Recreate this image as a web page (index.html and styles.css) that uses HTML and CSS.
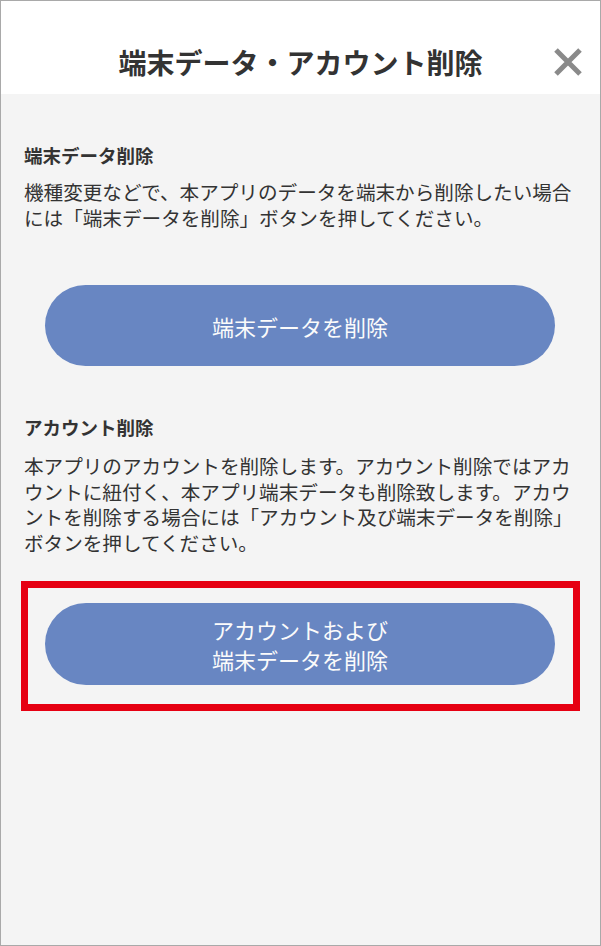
FILE: index.html
```html
<!DOCTYPE html>
<html lang="ja">
<head>
<meta charset="utf-8">
<title>端末データ・アカウント削除</title>
<link rel="stylesheet" href="styles.css">
</head>
<body>
<div class="frame">
  <header class="header">
    <span class="spacer"></span>
    <h1 class="title">端末データ・アカウント削除</h1>
    <button class="close" aria-label="閉じる">
      <svg width="30" height="30" viewBox="0 0 30 30"><path d="M3 3 L27 27 M27 3 L3 27" stroke="#8a8a8a" stroke-width="5" fill="none"/></svg>
    </button>
  </header>
  <main class="content">
    <h2 class="heading">端末データ削除</h2>
    <p class="text">機種変更などで、本アプリのデータを端末から削除したい場合には「端末データを削除」ボタンを押してください。</p>
    <div class="btn-row first">
      <button class="pill">端末データを削除</button>
    </div>
    <h2 class="heading second">アカウント削除</h2>
    <p class="text">本アプリのアカウントを削除します。アカウント削除ではアカウントに紐付く、本アプリ端末データも削除致します。アカウントを削除する場合には「アカウント及び端末データを削除」ボタンを押してください。</p>
    <div class="highlight">
      <button class="pill two">アカウントおよび<br>端末データを削除</button>
    </div>
  </main>
</div>
</body>
</html>
```

FILE: styles.css
```css
* { box-sizing: border-box; }
html, body { margin: 0; padding: 0; }
body {
  font-family: "Noto Sans CJK JP", "Noto Sans", sans-serif;
  color: #333;
  background: #fff;
}
.frame {
  width: 601px;
  height: 946px;
  border: 1px solid #a9a9a9;
  background: #f4f4f4;
  display: flex;
  flex-direction: column;
}
.header {
  background: #fff;
  height: 93px;
  padding-top: 40px;
  display: grid;
  grid-template-columns: 1fr auto 1fr;
  align-items: start;
}
.title {
  margin: 0;
  font-size: 28px;
  line-height: 42px;
  font-weight: 700;
  color: #333;
  letter-spacing: 0;
}
.close {
  justify-self: end;
  margin: 6px 17px 0 0;
  padding: 0;
  border: 0;
  background: none;
  width: 30px;
  height: 30px;
  display: block;
}
.close svg { display: block; }
.content {
  padding: 48px 24px 0 23px;
}
.heading {
  margin: 0;
  font-size: 18.5px;
  line-height: 26px;
  font-weight: 700;
  color: #333;
}
.text {
  margin: 11px 0 0;
  font-size: 19.6px;
  line-height: 25.5px;
  color: #333;
}
.heading.second { margin-top: 48px; }
.second + .text { margin-top: 13px; }
.btn-row {
  padding: 0 21px;
}
.btn-row.first { margin-top: 55px; }
.pill {
  display: block;
  width: 510px;
  height: 81px;
  border: 0;
  border-radius: 41px;
  background: #6886c2;
  color: #fbfbfb;
  font-family: "Noto Sans CJK JP", "Noto Sans", sans-serif;
  font-size: 22px;
  line-height: 30px;
  padding: 0;
  text-align: center;
}
.pill.two { height: 82px; }
.highlight {
  margin: 26px -4px 0 -3px;
  border: 7px solid #e60012;
  padding: 15px 17px 18px 17px;
  height: 130px;
}
```
